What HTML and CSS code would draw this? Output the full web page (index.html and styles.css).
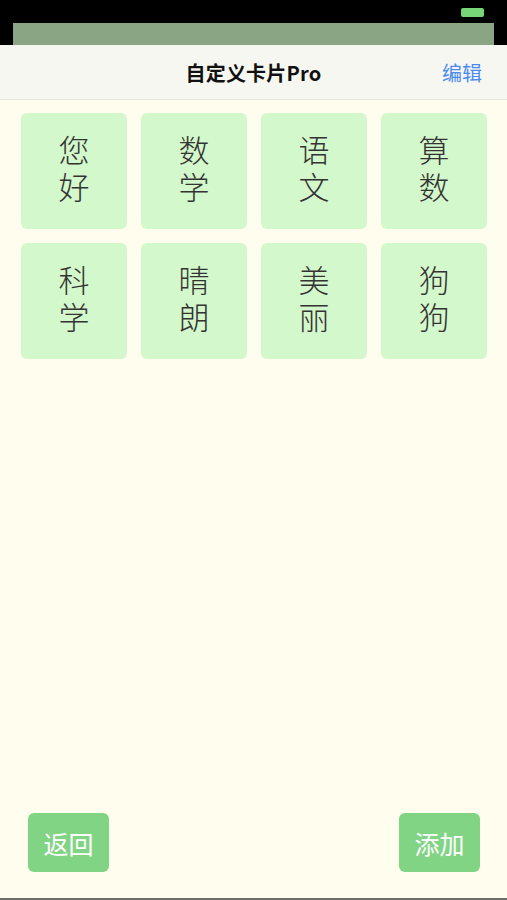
FILE: index.html
```html
<!DOCTYPE html>
<html lang="zh-CN">
<head>
<meta charset="utf-8">
<title>自定义卡片Pro</title>
<link rel="stylesheet" href="styles.css">
</head>
<body>
<div class="screen">
  <div class="status">
    <div class="battery"></div>
    <div class="strip"></div>
  </div>
  <header class="nav">
    <span></span>
    <h1 class="title">自定义卡片Pro</h1>
    <a class="edit">编辑</a>
  </header>
  <main class="grid">
    <div class="card"><span>您</span><span>好</span></div>
    <div class="card"><span>数</span><span>学</span></div>
    <div class="card"><span>语</span><span>文</span></div>
    <div class="card"><span>算</span><span>数</span></div>
    <div class="card"><span>科</span><span>学</span></div>
    <div class="card"><span>晴</span><span>朗</span></div>
    <div class="card"><span>美</span><span>丽</span></div>
    <div class="card"><span>狗</span><span>狗</span></div>
  </main>
  <footer class="footer">
    <button class="btn">返回</button>
    <button class="btn">添加</button>
  </footer>
</div>
</body>
</html>
```
FILE: styles.css
```css
* { box-sizing: border-box; }
html, body { margin: 0; padding: 0; }
body {
  width: 507px;
  height: 900px;
  font-family: "Noto Sans CJK SC", "Noto Sans", sans-serif;
  background: #fefdee;
}
.screen {
  height: 900px;
  display: flex;
  flex-direction: column;
  background: #fefdee;
  border-bottom: 2px solid #6c7068;
}
.status {
  height: 45px;
  background: #000;
  display: flex;
  flex-direction: column;
  padding-top: 8px;
}
.battery {
  align-self: flex-end;
  width: 23px;
  height: 9px;
  margin-right: 23px;
  background: #78d678;
  border-radius: 2px;
}
.strip {
  margin: 6px 13px 0;
  flex: 1;
  background: #8aa584;
}
.nav {
  height: 55px;
  background: #f7f7f2;
  border-bottom: 1px solid #e4e4de;
  display: grid;
  grid-template-columns: 1fr auto 1fr;
  align-items: center;
}
.title {
  margin: 0;
  font-size: 20px;
  font-weight: 700;
  color: #111;
  letter-spacing: 0.2px;
}
.edit {
  justify-self: end;
  padding-right: 25px;
  font-size: 20px;
  color: #4a8af0;
}
.grid {
  flex: 1;
  display: grid;
  grid-template-columns: repeat(4, 106px);
  grid-auto-rows: 116px;
  gap: 14px;
  align-content: start;
  padding: 13px 0 0 21px;
}
.card {
  background: #d3f8cb;
  border-radius: 6px;
  display: flex;
  flex-direction: column;
  align-items: center;
  justify-content: center;
  font-family: "Liberation Sans", "Noto Sans CJK SC", sans-serif;
  font-size: 31px;
  line-height: 37px;
  color: #333;
  font-weight: 300;
  padding-bottom: 2px;
}
.card span {
  display: block;
  height: 37px;
}
.footer {
  display: flex;
  justify-content: space-between;
  padding: 0 27px 26px 28px;
}
.btn {
  width: 81px;
  height: 59px;
  border: none;
  border-radius: 6px;
  background: #80d484;
  color: #fff;
  font-family: "Noto Sans CJK SC", "Noto Sans", sans-serif;
  font-size: 25px;
  padding: 0;
}
```
